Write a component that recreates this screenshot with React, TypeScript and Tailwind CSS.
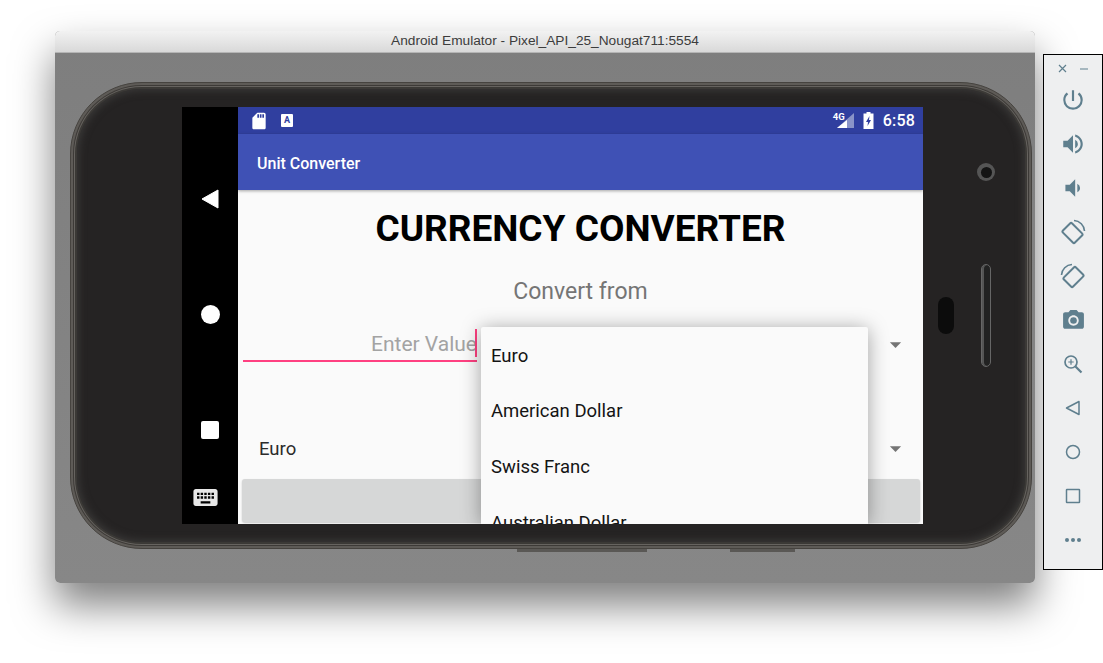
import React from "react";
import { MdPowerSettingsNew, MdVolumeUp, MdVolumeDown, MdPhotoCamera, MdSdCard, MdKeyboard, MdArrowDropDown } from "react-icons/md";

const C = "#5f7f8e";

function RotateIcon({ mirror }: { mirror?: boolean }) {
  return (
    <svg width="26" height="26" viewBox="0 0 26 26" fill="none" stroke={C} style={mirror ? { transform: "scaleX(-1)" } : undefined}>
      <rect x="6" y="5.5" width="13" height="17" rx="1.5" strokeWidth="2" transform="rotate(-45 12.5 14)" />
      <path d="M14 1.5 A 11 11 0 0 1 24.5 12" strokeWidth="1.6" />
    </svg>
  );
}

function ZoomIcon() {
  return (
    <svg width="20" height="20" viewBox="0 0 20 20" fill="none" stroke={C}>
      <circle cx="8" cy="8" r="6" strokeWidth="1.7" />
      <path d="M12.5 12.5 L18.5 18.5" strokeWidth="2.2" />
      <path d="M5.3 8 H10.7 M8 5.3 V10.7" strokeWidth="1.2" />
    </svg>
  );
}

function Tool({ children }: { children: React.ReactNode }) {
  return <div className="h-[44px] flex items-center justify-center">{children}</div>;
}

function Toolbar() {
  return (
    <div className="w-[60px] h-[516px] mt-[23px] ml-[8px] border border-black bg-[#eeeff0] flex flex-col">
      <div className="h-[23px] mt-[2px] flex items-center justify-center gap-[13px]">
        <svg width="9" height="9" viewBox="0 0 9 9" stroke={C} strokeWidth="1.2"><path d="M1 1 L8 8 M8 1 L1 8" /></svg>
        <div className="w-[8px] h-[2px] bg-[#a6b7bf]" />
      </div>
      <div className="mt-[-2px] flex flex-col">
        <Tool><MdPowerSettingsNew size={26} color={C} /></Tool>
        <Tool><MdVolumeUp size={26} color={C} /></Tool>
        <Tool><MdVolumeDown size={26} color={C} /></Tool>
        <Tool><RotateIcon /></Tool>
        <Tool><RotateIcon mirror /></Tool>
        <Tool><MdPhotoCamera size={25} color={C} /></Tool>
        <Tool><ZoomIcon /></Tool>
        <Tool>
          <svg width="16" height="16" viewBox="0 0 16 16" fill="none" stroke={C} strokeWidth="1.5"><path d="M14 1.5 V14.5 L1.5 8 Z" strokeLinejoin="round" /></svg>
        </Tool>
        <Tool>
          <svg width="16" height="16" viewBox="0 0 16 16" fill="none" stroke={C} strokeWidth="1.5"><circle cx="8" cy="8" r="6.5" /></svg>
        </Tool>
        <Tool>
          <svg width="16" height="16" viewBox="0 0 16 16" fill="none" stroke={C} strokeWidth="1.5"><rect x="1.5" y="1.5" width="13" height="13" rx="0.5" /></svg>
        </Tool>
        <Tool>
          <svg width="18" height="6" viewBox="0 0 18 6" fill={C}><circle cx="3" cy="3" r="2" /><circle cx="9" cy="3" r="2" /><circle cx="15" cy="3" r="2" /></svg>
        </Tool>
      </div>
    </div>
  );
}

function NavBar() {
  return (
    <div className="w-[56px] bg-black flex flex-col items-center shrink-0">
      <svg className="mt-[82px]" width="18" height="20" viewBox="0 0 18 20" fill="white"><path d="M17 1 V19 L1 10 Z" stroke="white" strokeLinejoin="round" /></svg>
      <div className="mt-[96px] w-[19px] h-[19px] rounded-full bg-white" />
      <div className="mt-[97px] w-[18px] h-[18px] rounded-[2px] bg-white" />
      <MdKeyboard className="mt-[44px] mr-[9px]" size={29} color="#e8e8e8" />
    </div>
  );
}

function StatusBar() {
  return (
    <div className="h-[27px] bg-[#303f9f] flex items-center pl-[11px] pr-[8px] text-white">
      <MdSdCard size={20} color="white" />
      <div className="ml-[12px] w-[12px] h-[13px] bg-white rounded-[1px] flex items-center justify-center text-[9px] font-bold text-[#303f9f] leading-none">A</div>
      <div className="flex-1" />
      <div className="relative w-[21px] h-[16px]">
        <svg className="absolute left-[4px] top-0" width="17" height="15" viewBox="0 0 17 15">
          <path d="M17 0 V15 H0 Z" fill="#8a94c8" />
          <path d="M10 7 V15 H0 Z" fill="white" />
        </svg>
        <span className="absolute left-0 top-[-1px] text-[9.5px] font-bold leading-[10px]">4G</span>
      </div>
      <svg className="ml-[9px]" width="11" height="17" viewBox="0 0 11 17">
        <path fillRule="evenodd" d="M3.5 0 H7.5 V1.5 H10.5 V17 H0.5 V1.5 H3.5 Z M6.5 4 L3 10 H5 L4.5 14 L8 8 H6 Z" fill="white" />
      </svg>
      <span className="ml-[9px] text-[16px] font-medium leading-none tracking-[0.2px]">6:58</span>
    </div>
  );
}

function Dropdown() {
  const items = ["Euro", "American Dollar", "Swiss Franc", "Australian Dollar"];
  return (
    <div className="absolute left-[299px] top-[220px] bottom-0 w-[387px] bg-[#fafafa] rounded-t-[2px] overflow-hidden shadow-[0_2px_20px_rgba(0,0,0,0.36)] pl-[10px]">
      {items.map((t) => (
        <div key={t} className="h-[55.7px] flex items-center pt-[2px] text-[18.5px] text-[#141414] leading-none">{t}</div>
      ))}
    </div>
  );
}

function Screen() {
  return (
    <div className="relative w-[741px] h-[417px] flex overflow-hidden shrink-0" style={{ fontFamily: "Roboto, sans-serif" }}>
      <NavBar />
      <div className="flex-1 flex flex-col bg-[#fafafa]">
        <StatusBar />
        <div className="h-[56px] bg-[#3f51b5] flex items-center pl-[19px] pt-[3px] text-white text-[16px] font-medium shadow-[0_1px_3px_rgba(0,0,0,0.35)] z-10">Unit Converter</div>
        <div className="h-[76px] flex items-center justify-center pt-[2px] text-[37px] font-bold text-black">CURRENCY CONVERTER</div>
        <div className="h-[50px] flex items-center justify-center pt-[2px] text-[23px] text-[#757575]">Convert from</div>
        <div className="h-[56px] flex items-start">
          <div className="relative ml-[5px] w-[234px] h-[46px] border-b-[2px] border-[#ff4081] flex justify-end items-center pt-[13px]">
            <span className="text-[21px] text-[#a3a3a3] leading-none">Enter Value</span>
            <div className="absolute right-0 top-[13px] w-[2px] h-[28px] bg-[#ff4081]" />
          </div>
          <div className="flex-1 flex justify-end pr-[14px] pt-[15px]"><MdArrowDropDown size={27} color="#757575" /></div>
        </div>
        <div className="h-[48px]" />
        <div className="h-[56px] flex items-center pl-[21px] pr-[14px] justify-between text-[18.5px] text-[#2b2b2b]">
          <span className="pt-[3px]">Euro</span>
          <MdArrowDropDown size={27} color="#757575" />
        </div>
        <div className="ml-[4px] mr-[3px] h-[43px] mt-[3px] bg-[#d6d7d7] rounded-[3px] shadow-[0_1px_2px_rgba(0,0,0,0.2)]" />
      </div>
      <Dropdown />
    </div>
  );
}

function Phone() {
  return (
    <div className="relative w-[962px] h-[467px] ml-[15px] mt-[29px] rounded-[72px] bg-[#5e5b57] border border-[#46433f] p-[2px]">
      <div className="w-full h-full rounded-[69px] bg-[#3d3a37] p-[1px]">
        <div className="w-full h-full rounded-[68px] bg-[#66635f] p-[1px]">
          <div className="w-full h-full rounded-[67px] bg-[#3b3936] p-[2px]">
            <div className="w-full h-full rounded-[65px] pl-[105px] pt-[18px] bg-[#252323] shadow-[inset_0_0_8px_1px_#3d3c3b] flex">
              <Screen />
              <div className="relative flex-1">
                <div className="absolute left-[54px] top-[56px] w-[18px] h-[18px] rounded-full bg-[#555] flex items-center justify-center">
                  <div className="w-[11px] h-[11px] rounded-full bg-[#141414]" />
                </div>
                <div className="absolute left-[15px] top-[190px] w-[16px] h-[37px] rounded-full bg-[#0c0c0c]" />
                <div className="absolute left-[58px] top-[157px] w-[10px] h-[103px] rounded-full border border-[#666] bg-[#222] shadow-[inset_2px_0_0_#555]" />
              </div>
            </div>
          </div>
        </div>
      </div>
      <div className="absolute left-[446px] bottom-[-4px] w-[130px] h-[3px] bg-[#5a5855]" />
      <div className="absolute left-[659px] bottom-[-4px] w-[65px] h-[3px] bg-[#5a5855]" />
    </div>
  );
}

export default function App() {
  return (
    <div className="w-[1103px] h-[663px] bg-white overflow-hidden flex items-start pl-[55px] pt-[31px]">
      <div className="w-[980px] h-[552px] rounded-[5px] shadow-[0_22px_40px_rgba(0,0,0,0.5)] overflow-hidden flex flex-col bg-gradient-to-b from-[#7e7e7e] to-[#878787]">
        <div className="h-[22px] bg-gradient-to-b from-[#f2f2f2] to-[#d9d9d9] border-b border-[#b5b5b5] flex items-center justify-center text-[13.7px] text-[#3c3c3c]" style={{ fontFamily: '"Liberation Sans", sans-serif' }}>
          Android Emulator - Pixel_API_25_Nougat711:5554
        </div>
        <Phone />
      </div>
      <Toolbar />
    </div>
  );
}
